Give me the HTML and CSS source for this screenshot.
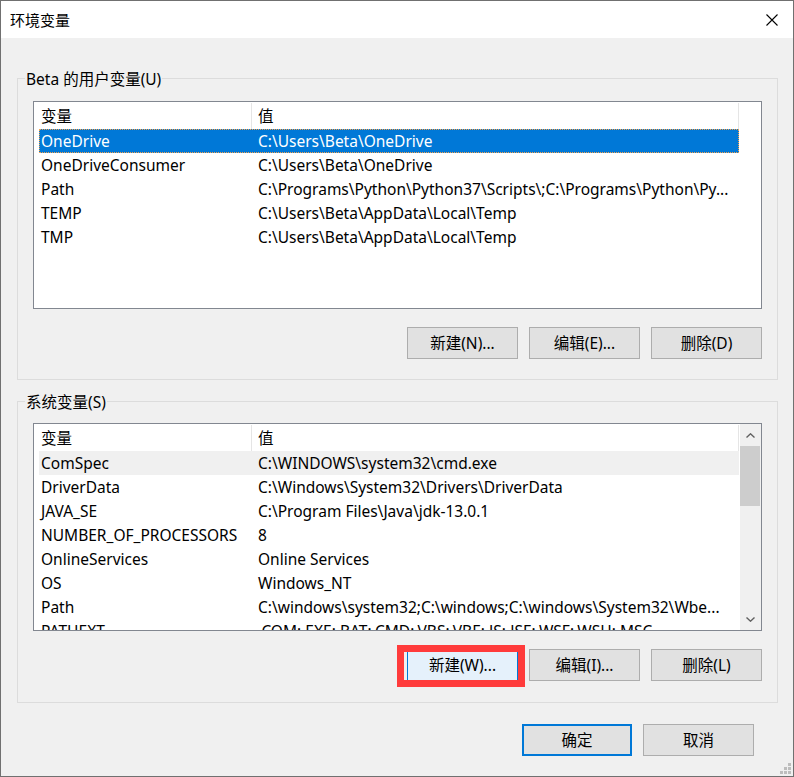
FILE: index.html
```html
<!DOCTYPE html>
<html lang="zh-CN">
<head>
  <meta charset="UTF-8">
  <title>环境变量</title>
  <link rel="stylesheet" href="styles.css">
</head>
<body>
  <div class="window">
    <div class="titlebar">
      <span class="title">环境变量</span>
      <svg class="close" viewBox="0 0 12 12"><path d="M0.5 0.5 L11.5 11.5 M11.5 0.5 L0.5 11.5" stroke="#000" stroke-width="1.1" fill="none"/></svg>
    </div>

    <div class="content">
      <div class="group">
        <span class="legend">Beta 的用户变量(U)</span>
        <div class="list">
          <div class="list-main">
            <div class="head"><div class="h1">变量</div><div class="h2">值</div></div>
            <div class="row selected"><div class="c1">OneDrive</div><div class="c2">C:\Users\Beta\OneDrive</div></div>
            <div class="row"><div class="c1">OneDriveConsumer</div><div class="c2">C:\Users\Beta\OneDrive</div></div>
            <div class="row"><div class="c1">Path</div><div class="c2">C:\Programs\Python\Python37\Scripts\;C:\Programs\Python\Py...</div></div>
            <div class="row"><div class="c1">TEMP</div><div class="c2">C:\Users\Beta\AppData\Local\Temp</div></div>
            <div class="row"><div class="c1">TMP</div><div class="c2">C:\Users\Beta\AppData\Local\Temp</div></div>
          </div>
        </div>
        <div class="buttons">
          <button class="btn">新建(N)...</button>
          <button class="btn">编辑(E)...</button>
          <button class="btn">删除(D)</button>
        </div>
      </div>

      <div class="group second">
        <span class="legend">系统变量(S)</span>
        <div class="list">
          <div class="list-main">
            <div class="head"><div class="h1">变量</div><div class="h2">值</div></div>
            <div class="row hot"><div class="c1">ComSpec</div><div class="c2">C:\WINDOWS\system32\cmd.exe</div></div>
            <div class="row"><div class="c1">DriverData</div><div class="c2">C:\Windows\System32\Drivers\DriverData</div></div>
            <div class="row"><div class="c1">JAVA_SE</div><div class="c2">C:\Program Files\Java\jdk-13.0.1</div></div>
            <div class="row"><div class="c1">NUMBER_OF_PROCESSORS</div><div class="c2">8</div></div>
            <div class="row"><div class="c1">OnlineServices</div><div class="c2">Online Services</div></div>
            <div class="row"><div class="c1">OS</div><div class="c2">Windows_NT</div></div>
            <div class="row"><div class="c1">Path</div><div class="c2">C:\windows\system32;C:\windows;C:\windows\System32\Wbe...</div></div>
            <div class="row"><div class="c1">PATHEXT</div><div class="c2">.COM;.EXE;.BAT;.CMD;.VBS;.VBE;.JS;.JSE;.WSF;.WSH;.MSC</div></div>
          </div>
          <div class="scrollbar">
            <div class="sb-btn"><svg width="9" height="5" viewBox="0 0 9 5"><polyline points="0.5,4.5 4.5,0.8 8.5,4.5" fill="none" stroke="#606060" stroke-width="1.4"/></svg></div>
            <div class="sb-track"><div class="sb-thumb"></div></div>
            <div class="sb-btn"><svg width="9" height="5" viewBox="0 0 9 5"><polyline points="0.5,0.5 4.5,4.2 8.5,0.5" fill="none" stroke="#606060" stroke-width="1.4"/></svg></div>
          </div>
        </div>
        <div class="buttons">
          <button class="btn hot">新建(W)...<span class="mark"></span></button>
          <button class="btn">编辑(I)...</button>
          <button class="btn">删除(L)</button>
        </div>
      </div>

      <div class="footer">
        <button class="btn default">确定</button>
        <button class="btn">取消</button>
      </div>
    </div>

    <svg class="grip" width="11" height="11" viewBox="0 0 11 11">
      <rect x="8" y="0" width="3" height="3" fill="#bdbdbd"/>
      <rect x="4" y="4" width="3" height="3" fill="#bdbdbd"/>
      <rect x="8" y="4" width="3" height="3" fill="#bdbdbd"/>
      <rect x="0" y="8" width="3" height="3" fill="#bdbdbd"/>
      <rect x="4" y="8" width="3" height="3" fill="#bdbdbd"/>
      <rect x="8" y="8" width="3" height="3" fill="#bdbdbd"/>
    </svg>
  </div>
</body>
</html>
```

FILE: styles.css
```css
* {
  box-sizing: border-box;
  margin: 0;
  padding: 0;
}
body {
  font-family: "Noto Sans", "Noto Sans CJK SC", sans-serif;
  font-size: 15.5px;
  color: #000;
  background: #fff;
}
.window {
  position: relative;
  width: 794px;
  height: 777px;
  border: 1px solid #707070;
  background: #f0f0f0;
}
.titlebar {
  height: 37px;
  background: #fff;
  display: flex;
  align-items: center;
  justify-content: space-between;
  padding: 0 15px 0 9px;
}
.title {
  font-size: 15px;
  line-height: 20px;
}
.close {
  width: 12px;
  height: 12px;
}
.content {
  padding: 40px 15px 0 16px;
}
.group {
  position: relative;
  border: 1px solid #dcdcdc;
  padding: 22px 15px 20px 15px;
}
.group.second {
  margin-top: 21px;
  padding-top: 21px;
  padding-bottom: 21px;
}
.legend {
  position: absolute;
  top: -10px;
  left: 7px;
  padding: 0 1px;
  background: #f0f0f0;
  line-height: 20px;
}
.list {
  height: 208px;
  border: 1px solid #828790;
  background: #fff;
  display: flex;
  overflow: hidden;
}
.list-main {
  flex: 1;
  min-width: 0;
  overflow: hidden;
}
.head {
  display: flex;
  height: 27px;
  padding-top: 1px;
  line-height: 26px;
}
.head .h1 {
  width: 218px;
  padding-left: 7px;
  border-right: 1px solid #e5e5e5;
}
.head .h2 {
  width: 487px;
  padding-left: 6px;
  border-right: 1px solid #e5e5e5;
}
.row {
  display: flex;
  width: 700px;
  height: 24px;
  margin-left: 5px;
  line-height: 24px;
  white-space: nowrap;
}
.row .c1 {
  width: 212px;
  padding-left: 2px;
  overflow: hidden;
}
.row .c2 {
  flex: 1;
  padding: 0 2px 0 7px;
  overflow: hidden;
}
.row.selected {
  background: #0078d7;
  color: #fff;
  outline: 1px dotted #f5a24c;
  outline-offset: -1px;
}
.row.hot {
  background: #f0f0f0;
}
.scrollbar {
  width: 21px;
  background: #f0f0f0;
  display: flex;
  flex-direction: column;
}
.sb-btn {
  height: 22px;
  display: flex;
  align-items: center;
  justify-content: center;
  padding-right: 1px;
}
.sb-track {
  flex: 1;
}
.sb-thumb {
  height: 60px;
  margin-right: 1px;
  background: #cdcdcd;
}
.buttons {
  display: flex;
  justify-content: flex-end;
  gap: 11px;
  margin-top: 18px;
}
.btn {
  width: 111px;
  height: 32px;
  padding: 0;
  border: 1px solid #adadad;
  background: #e1e1e1;
  font: inherit;
  color: #000;
  line-height: 30px;
  text-align: center;
}
.btn.hot {
  position: relative;
  background: #e5f1fb;
  border-color: #0078d7;
}
.mark {
  position: absolute;
  left: -11px;
  top: -5px;
  width: 128px;
  height: 42px;
  border: 7px solid #ff3b3b;
}
.footer {
  display: flex;
  justify-content: flex-end;
  gap: 11px;
  padding: 21px 24px 0 0;
}
.btn.default {
  width: 110px;
  border: 2px solid #0078d7;
  line-height: 28px;
}
.grip {
  position: absolute;
  right: 2px;
  bottom: 2px;
}
```
